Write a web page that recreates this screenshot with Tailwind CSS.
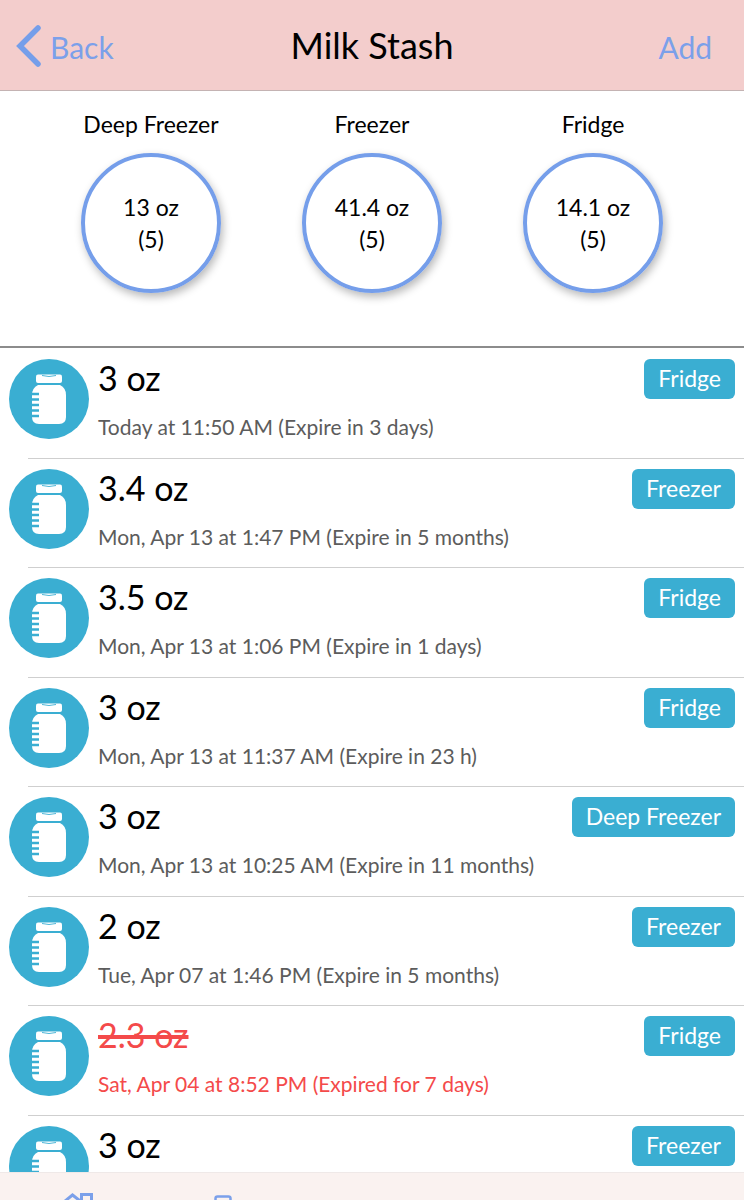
<!DOCTYPE html>
<html lang="en">
<head>
<meta charset="utf-8">
<meta name="viewport" content="width=device-width, initial-scale=1">
<title>Milk Stash</title>
<script src="https://cdn.jsdelivr.net/npm/@tailwindcss/browser@4"></script>
</head>
<body class="bg-white text-black font-['Lato',sans-serif]">
<svg class="hidden" aria-hidden="true">
  <symbol id="jar" viewBox="0 0 80 80">
    <circle cx="40" cy="40" r="40" fill="#3aaed2"/>
    <rect x="27" y="15.500" width="26" height="8.500" rx="2" fill="#fff"/>
    <path d="M33 16.500Q40 18.500 47 16.500" fill="none" stroke="#3aaed2" stroke-width=".9"/>
    <path d="M29 26H51Q57 29 57 36V58Q57 65 50 65H30Q23 65 23 58V36Q23 29 29 26Z" fill="#fff"/>
    <path d="M22 35H30M22 40.500H30M22 46H30M22 51.500H30M22 57H30" stroke="#3aaed2" stroke-width="2.600"/>
  </symbol>
</svg>
<div class="flex h-screen flex-col overflow-hidden">
  <header class="grid h-[91px] shrink-0 grid-cols-3 items-center border-b border-[#c4b3b3] bg-[#f3cdcc] pr-8 pl-4">
    <button class="flex items-center gap-2 justify-self-start pt-0.5 text-[30px] text-[#7ba0ea]">
      <svg class="h-[42px] w-[26px]" viewBox="0 0 26 42" fill="none" stroke="#759eea" stroke-width="5.500" stroke-linecap="round"><path d="M22 3L4 21L22 39"/></svg>
      <span class="pt-0.5">Back</span>
    </button>
    <h1 class="justify-self-center pl-4 text-4xl whitespace-nowrap">Milk Stash</h1>
    <button class="justify-self-end pt-1 text-[30px] text-[#7ba0ea]">Add</button>
  </header>

  <section class="flex h-[257px] shrink-0 justify-evenly border-b-2 border-[#8c8c8c] pt-5 text-[23px]">
    <div class="flex flex-col items-center gap-4"><h2 class="leading-[26px]">Deep Freezer</h2>
      <p class="flex size-[140px] flex-col items-center justify-center rounded-full border-4 border-[#759eea] leading-8 shadow-[2px_4px_8px_rgba(0,0,0,0.28)]"><span>13 oz</span><span>(5)</span></p></div>
    <div class="flex flex-col items-center gap-4"><h2 class="leading-[26px]">Freezer</h2>
      <p class="flex size-[140px] flex-col items-center justify-center rounded-full border-4 border-[#759eea] leading-8 shadow-[2px_4px_8px_rgba(0,0,0,0.28)]"><span>41.4 oz</span><span>(5)</span></p></div>
    <div class="flex flex-col items-center gap-4"><h2 class="leading-[26px]">Fridge</h2>
      <p class="flex size-[140px] flex-col items-center justify-center rounded-full border-4 border-[#759eea] leading-8 shadow-[2px_4px_8px_rgba(0,0,0,0.28)]"><span>14.1 oz</span><span>(5)</span></p></div>
  </section>

  <ul class="min-h-0 flex-1 overflow-hidden">
    <li class="odd:h-[110px] even:h-[109px]">
      <div class="flex h-full items-start px-[9px] pt-[11px]">
        <svg class="size-20 shrink-0" aria-hidden="true"><use href="#jar"/></svg>
        <div class="min-w-0 flex-1 pl-[9px]"><h3 class="text-[34px] leading-[38px]">3 oz</h3><p class="pt-4 text-[21px] leading-7 whitespace-nowrap text-[#5c5c5c]">Today at 11:50 AM (Expire in 3 days)</p></div>
        <span class="h-10 shrink-0 rounded-md bg-[#3aaed2] px-3.5 text-[23px] leading-[38px] text-white">Fridge</span>
      </div>
      <hr class="ml-7 border-[#cfcfcf]">
    </li>
    <li class="odd:h-[110px] even:h-[109px]">
      <div class="flex h-full items-start px-[9px] pt-[11px]">
        <svg class="size-20 shrink-0" aria-hidden="true"><use href="#jar"/></svg>
        <div class="min-w-0 flex-1 pl-[9px]"><h3 class="text-[34px] leading-[38px]">3.4 oz</h3><p class="pt-4 text-[21px] leading-7 whitespace-nowrap text-[#5c5c5c]">Mon, Apr 13 at 1:47 PM (Expire in 5 months)</p></div>
        <span class="h-10 shrink-0 rounded-md bg-[#3aaed2] px-3.5 text-[23px] leading-[38px] text-white">Freezer</span>
      </div>
      <hr class="ml-7 border-[#cfcfcf]">
    </li>
    <li class="odd:h-[110px] even:h-[109px]">
      <div class="flex h-full items-start px-[9px] pt-[11px]">
        <svg class="size-20 shrink-0" aria-hidden="true"><use href="#jar"/></svg>
        <div class="min-w-0 flex-1 pl-[9px]"><h3 class="text-[34px] leading-[38px]">3.5 oz</h3><p class="pt-4 text-[21px] leading-7 whitespace-nowrap text-[#5c5c5c]">Mon, Apr 13 at 1:06 PM (Expire in 1 days)</p></div>
        <span class="h-10 shrink-0 rounded-md bg-[#3aaed2] px-3.5 text-[23px] leading-[38px] text-white">Fridge</span>
      </div>
      <hr class="ml-7 border-[#cfcfcf]">
    </li>
    <li class="odd:h-[110px] even:h-[109px]">
      <div class="flex h-full items-start px-[9px] pt-[11px]">
        <svg class="size-20 shrink-0" aria-hidden="true"><use href="#jar"/></svg>
        <div class="min-w-0 flex-1 pl-[9px]"><h3 class="text-[34px] leading-[38px]">3 oz</h3><p class="pt-4 text-[21px] leading-7 whitespace-nowrap text-[#5c5c5c]">Mon, Apr 13 at 11:37 AM (Expire in 23 h)</p></div>
        <span class="h-10 shrink-0 rounded-md bg-[#3aaed2] px-3.5 text-[23px] leading-[38px] text-white">Fridge</span>
      </div>
      <hr class="ml-7 border-[#cfcfcf]">
    </li>
    <li class="odd:h-[110px] even:h-[109px]">
      <div class="flex h-full items-start px-[9px] pt-[11px]">
        <svg class="size-20 shrink-0" aria-hidden="true"><use href="#jar"/></svg>
        <div class="min-w-0 flex-1 pl-[9px]"><h3 class="text-[34px] leading-[38px]">3 oz</h3><p class="pt-4 text-[21px] leading-7 whitespace-nowrap text-[#5c5c5c]">Mon, Apr 13 at 10:25 AM (Expire in 11 months)</p></div>
        <span class="h-10 shrink-0 rounded-md bg-[#3aaed2] px-3.5 text-[23px] leading-[38px] text-white">Deep Freezer</span>
      </div>
      <hr class="ml-7 border-[#cfcfcf]">
    </li>
    <li class="odd:h-[110px] even:h-[109px]">
      <div class="flex h-full items-start px-[9px] pt-[11px]">
        <svg class="size-20 shrink-0" aria-hidden="true"><use href="#jar"/></svg>
        <div class="min-w-0 flex-1 pl-[9px]"><h3 class="text-[34px] leading-[38px]">2 oz</h3><p class="pt-4 text-[21px] leading-7 whitespace-nowrap text-[#5c5c5c]">Tue, Apr 07 at 1:46 PM (Expire in 5 months)</p></div>
        <span class="h-10 shrink-0 rounded-md bg-[#3aaed2] px-3.5 text-[23px] leading-[38px] text-white">Freezer</span>
      </div>
      <hr class="ml-7 border-[#cfcfcf]">
    </li>
    <li class="odd:h-[110px] even:h-[109px]">
      <div class="flex h-full items-start px-[9px] pt-[11px]">
        <svg class="size-20 shrink-0" aria-hidden="true"><use href="#jar"/></svg>
        <div class="min-w-0 flex-1 pl-[9px] text-[#f44a4a]"><h3 class="text-[34px] leading-[38px] line-through decoration-4">2.3 oz</h3><p class="pt-4 text-[21px] leading-7 whitespace-nowrap">Sat, Apr 04 at 8:52 PM (Expired for 7 days)</p></div>
        <span class="h-10 shrink-0 rounded-md bg-[#3aaed2] px-3.5 text-[23px] leading-[38px] text-white">Fridge</span>
      </div>
      <hr class="ml-7 border-[#cfcfcf]">
    </li>
    <li class="odd:h-[110px] even:h-[109px]">
      <div class="flex h-full items-start px-[9px] pt-[11px]">
        <svg class="size-20 shrink-0" aria-hidden="true"><use href="#jar"/></svg>
        <div class="min-w-0 flex-1 pl-[9px]"><h3 class="text-[34px] leading-[38px]">3 oz</h3></div>
        <span class="h-10 shrink-0 rounded-md bg-[#3aaed2] px-3.5 text-[23px] leading-[38px] text-white">Freezer</span>
      </div>
    </li>
  </ul>

  <nav class="grid h-7 shrink-0 grid-cols-5 overflow-hidden border-t border-[#efe9e8] bg-[#faf2f0] pl-1 text-[#7ba0ea]">
    <a href="#home" aria-label="Home" class="flex justify-center pt-[18px]">
      <svg class="size-10 shrink-0" viewBox="0 0 40 40" fill="none" stroke="currentColor" stroke-width="3"><path d="M1 15L14.500 4L23.500 11V3.500H33.500V36H6V14"/></svg>
    </a>
    <a href="#log" aria-label="Log" class="flex justify-center pt-[18px]">
      <svg class="size-10 shrink-0" viewBox="0 0 40 40" fill="none" stroke="currentColor" stroke-width="2.500"><rect x="9.500" y="5.500" width="15" height="30" rx="2"/></svg>
    </a>
  </nav>
</div>
</body>
</html>
